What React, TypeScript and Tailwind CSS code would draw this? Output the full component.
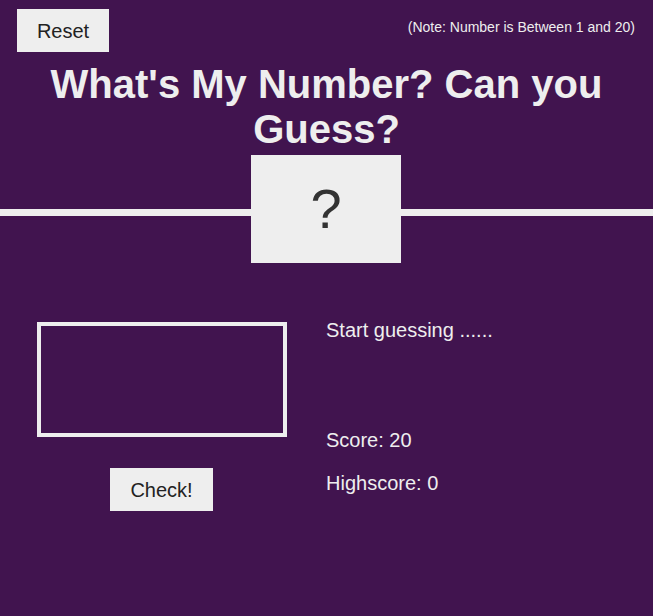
import React, { useState } from "react";

export default function App() {
  const [guess, setGuess] = useState("");
  const [score] = useState(20);
  const [highscore] = useState(0);

  return (
    <div className="min-h-screen bg-[#41144f] text-[#eee] font-['Liberation_Sans',Arial,sans-serif]">
      {/* Header */}
      <header>
        <div className="flex justify-between items-start pt-[9px] pl-[17px] pr-[18px]">
          <button className="w-[92px] h-[43px] bg-[#eee] text-[#222] text-[20px]">
            Reset
          </button>
          <p className="text-[14px] leading-[16px] mt-[10px]">
            (Note: Number is Between 1 and 20)
          </p>
        </div>
        <h1 className="mt-[10px] text-center text-[40px] leading-[45px] font-bold px-[40px]">
          What's My Number? Can you Guess?
        </h1>

        {/* Divider with number box */}
        <div className="flex items-start mt-[3px]">
          <div className="w-[251px] h-[7px] mt-[54px] bg-[#eee]" />
          <div className="w-[150px] h-[108px] bg-[#eee] text-[#333] text-[56px] flex items-center justify-center">
            ?
          </div>
          <div className="flex-1 h-[7px] mt-[54px] bg-[#eee]" />
        </div>
      </header>

      {/* Main */}
      <main className="flex mt-[59px]">
        <section className="w-[326px] flex flex-col items-start pl-[37px]">
          <input
            type="number"
            value={guess}
            onChange={(e) => setGuess(e.target.value)}
            className="w-[250px] h-[115px] border-4 border-[#eee] bg-transparent text-[#eee] text-[40px] text-center outline-none"
          />
          <button className="mt-[31px] ml-[73px] w-[103px] h-[43px] bg-[#eee] text-[#222] text-[20px]">
            Check!
          </button>
        </section>
        <section className="flex flex-col text-[20px] leading-[23px] -mt-[3px]">
          <p>Start guessing ......</p>
          <p className="mt-[87px]">Score: {score}</p>
          <p className="mt-[20px]">Highscore: {highscore}</p>
        </section>
      </main>
    </div>
  );
}
